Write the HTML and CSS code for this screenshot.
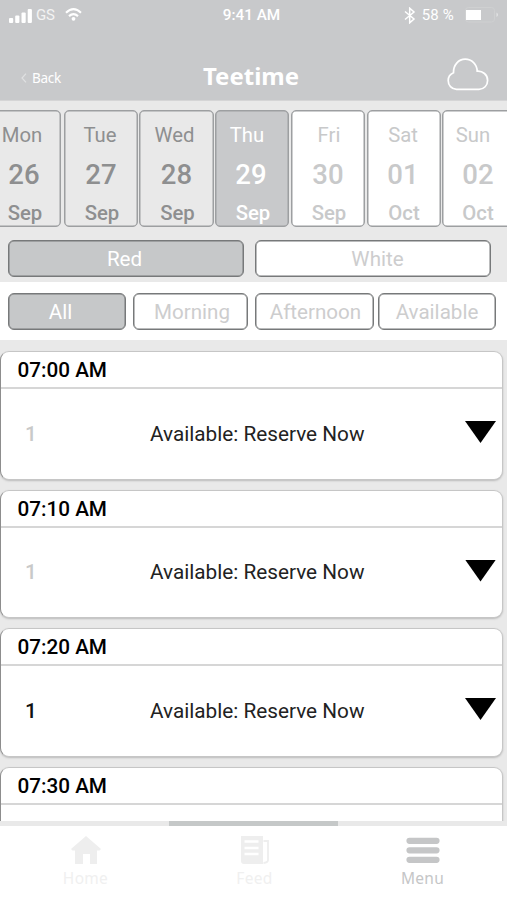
FILE: index.html
```html
<!DOCTYPE html>
<html lang="en">
<head>
<meta charset="utf-8">
<title>Teetime</title>
<link rel="stylesheet" href="styles.css">
</head>
<body>
<header class="header">
  <div class="status">
    <div class="carrier">
      <svg width="24" height="15" viewBox="0 0 24 15" fill="#fff"><rect x="0" y="10" width="4.2" height="5" rx="1"/><rect x="6.2" y="7.5" width="4.2" height="7.5" rx="1"/><rect x="12.5" y="4.5" width="4.2" height="10.5" rx="1"/><rect x="18.7" y="1" width="4.2" height="14" rx="1"/></svg>
      <span>GS</span>
      <svg class="wifi" width="17" height="13" viewBox="0 0 17 13" fill="none" stroke="#fff" stroke-width="2.1"><path d="M1 4.7Q8.500-2.300 16 4.700"/><path d="M4 8.100Q8.500 4 13 8.100"/><circle cx="8.500" cy="10.800" r="1.900" fill="#fff" stroke="none"/></svg>
    </div>
    <div class="clock">9:41 AM</div>
    <div class="power">
      <svg width="12" height="17" viewBox="0 0 12 17" fill="none" stroke="#fff" stroke-width="1.500"><path d="M1 4.500 10 12 5.700 15.800V1.200L10 5 1 12.500"/></svg>
      <span>58 %</span>
      <svg class="battery" width="34" height="16" viewBox="0 0 34 16"><rect x=".5" y=".5" width="29" height="14.500" rx="3" fill="none" stroke="#cfd0d1"/><rect x="1" y="3" width="15" height="10" fill="#fff"/><path d="M31.500 5.500q3 2.200 0 4.500z" fill="#e2e3e4"/></svg>
    </div>
  </div>
  <div class="titlebar">
    <div class="back"><svg width="6" height="10" viewBox="0 0 6 10" fill="none" stroke="#e0e1e2" stroke-width="1.200"><path d="M5 .7 1 5l4 4.300"/></svg><span>Back</span></div>
    <h1>Teetime</h1>
    <svg class="cloud" width="42" height="33" viewBox="0 0 42 33" fill="none" stroke="#fff" stroke-width="1.700"><path d="M9.500 31.300C4.500 31.300 1.200 27.200 1.200 22.500c0-3.500 2-6.300 5.300-7.700C6.200 7 11.500 1.200 18.200 1.200c6.600 0 11.800 5 12 12 5.500-.4 10.400 3.500 10.400 9.200 0 5-3.700 8.900-8.600 8.900z"/></svg>
  </div>
</header>
<section class="days">
  <div class="day mon past"><span>Mon</span><b>26</b><strong>Sep</strong></div>
  <div class="day tue past"><span>Tue</span><b>27</b><strong>Sep</strong></div>
  <div class="day wed past"><span>Wed</span><b>28</b><strong>Sep</strong></div>
  <div class="day thu current"><span>Thu</span><b>29</b><strong>Sep</strong></div>
  <div class="day fri"><span>Fri</span><b>30</b><strong>Sep</strong></div>
  <div class="day sat"><span>Sat</span><b>01</b><strong>Oct</strong></div>
  <div class="day sun"><span>Sun</span><b>02</b><strong>Oct</strong></div>
</section>
<section class="courses">
  <div class="button selected">Red</div>
  <div class="button white">White</div>
</section>
<section class="periods">
  <div class="button selected all">All</div>
  <div class="button morning">Morning</div>
  <div class="button afternoon">Afternoon</div>
  <div class="button available">Available</div>
</section>
<main class="slots">
  <article class="slot"><h2>07:00 AM</h2><div class="row"><span class="count">1</span><span class="label">Available: Reserve Now</span><i class="arrow"></i></div></article>
  <article class="slot"><h2>07:10 AM</h2><div class="row"><span class="count">1</span><span class="label">Available: Reserve Now</span><i class="arrow"></i></div></article>
  <article class="slot"><h2>07:20 AM</h2><div class="row"><span class="count active">1</span><span class="label">Available: Reserve Now</span><i class="arrow"></i></div></article>
  <article class="slot"><h2>07:30 AM</h2><div class="row"></div></article>
</main>
<div class="track"><div class="thumb"></div></div>
<nav class="tabs">
  <div class="tab"><svg width="30" height="29" viewBox="0 0 30 29" fill="#eee"><path d="M15 0 30 13 28.500 14.500H26V28H19V18H12V28H4V14.500H1.500L0 13z"/></svg><span>Home</span></div>
  <div class="tab"><svg width="30" height="29" viewBox="0 0 30 29"><path fill="#eee" d="M1 0H23V28H4Q1 28 1 25z"/><path d="M4.500 5.500h14M4.500 12h14M4.500 18h14" stroke="#fff" stroke-width="2.500" fill="none"/><path d="M23.500 5H28v19q0 2.500-4.500 3" stroke="#eee" stroke-width="1.800" fill="none"/></svg><span>Feed</span></div>
  <div class="tab menu"><svg width="34" height="29" viewBox="0 0 34 29" stroke="#c5c6c7" stroke-width="6.200" stroke-linecap="round"><path d="M3.500 4.800h27M3.500 14.300h27M3.500 23.800h27"/></svg><span>Menu</span></div>
</nav>
</body>
</html>
```
FILE: styles.css
```css
* { box-sizing: border-box; }
body {
  margin: 0;
  width: 507px;
  height: 900px;
  overflow: hidden;
  display: flex;
  flex-direction: column;
  background: #e9e9e9;
  font-family: Roboto, "Liberation Sans", sans-serif;
}
svg { display: block; flex: none; }
h1, h2 { margin: 0; }

.header { flex: none; height: 101px; background: #c8c9cb; color: #fff; border-bottom: 1px solid #d5d5d6; }
.status { display: grid; grid-template-columns: 1fr auto 1fr; height: 30px; padding: 0 8px 0 9px; align-items: center; font-size: 15px; }
.carrier, .power { display: flex; align-items: center; }
.carrier span { margin-left: 3px; letter-spacing: -.1px; color: #f3f3f3; }
.carrier .wifi { margin: 0 0 2px 10px; }
.clock { font-weight: 500; font-size: 15.3px; margin: 0 5px 0 0; }
.power { justify-content: flex-end; }
.power span { margin-left: 6px; letter-spacing: .2px; }
.battery { margin-left: 11px; }
.titlebar { display: grid; grid-template-columns: 1fr auto 1fr; height: 70px; padding: 0 18px 0 21px; align-items: center; font-family: "Noto Sans", sans-serif; }
.back { display: flex; align-items: center; gap: 5px; font-size: 13.500px; letter-spacing: -.3px; padding-top: 26px; }
h1 { font-size: 24px; line-height: 30px; padding-top: 21px; margin-right: 8px; }
.cloud { justify-self: end; margin-top: 19px; }

.days { flex: none; height: 136px; padding-top: 9px; display: flex; width: 520px; }
.day {
  flex: none;
  width: 74px;
  height: 117px;
  border: 1.500px solid #9d9fa1;
  border-radius: 5px;
  box-shadow: inset 0 0 0 .5px #9d9fa1;
  background: #fff;
  color: #c8c9ca;
  display: flex;
  flex-direction: column;
  align-items: center;
  font-size: 20.3px;
}
.day span { line-height: 24px; margin-top: 12px; transform: translateX(var(--name)); }
.day b { font-size: 27.500px; line-height: 32px; margin-top: 12px; font-weight: 500; transform: translateX(var(--date)); }
.day strong { line-height: 24px; margin-top: 10px; font-weight: 500; transform: translateX(var(--month)); }
.past { background: #e9e9e9; color: #8e8f90; }
.current { background: #c8c9cb; color: #fff; }
.mon { margin-left: -13px; --name: -2px; --date: 0px; --month: 1px; }
.tue { margin-left: 3px; --name: -1px; --date: 0px; --month: 1px; }
.wed { margin-left: 1px; width: 75px; --name: -2px; --date: 0px; --month: 1px; }
.thu { margin-left: 1px; --name: -5px; --date: -1px; --month: 1px; }
.fri { margin-left: 2px; --name: 1px; --date: 0px; --month: 1px; }
.sat { margin-left: 2px; --name: -1px; --date: -1px; --month: 0px; }
.sun { margin-left: 1px; --name: -6px; --date: -1px; --month: -1px; }

.courses, .periods { flex: none; display: flex; padding-left: 8px; }
.courses { height: 45px; padding-top: 3px; gap: 11px; }
.periods { height: 58px; padding-top: 11px; background: #fff; }
.button {
  height: 37px;
  border: 1.500px solid #77797a;
  border-radius: 6px;
  box-shadow: inset 0 0 0 .5px #77797a;
  background: #fff;
  color: #cdcdce;
  font-size: 20.600px;
  line-height: 37px;
  text-align: center;
}
.courses .button { width: 236px; }
.courses .white { padding-left: 9px; }
.courses .selected { padding-right: 3px; }
.button.selected { background: #c6c8c9; color: #fff; }
.periods .all { width: 118px; padding-right: 13px; }
.periods .morning { width: 115px; margin-left: 7px; padding-left: 3px; }
.periods .afternoon { width: 119px; margin-left: 7px; padding-left: 2px; }
.periods .available { width: 118px; margin-left: 4px; }

.slots { flex: none; height: 481px; overflow: hidden; padding-top: 11px; display: flex; flex-direction: column; gap: 10px; }
.slot {
  flex: none;
  width: 503px;
  height: 128.500px;
  background: #fff;
  border: 1px solid #c6c6c6;
  border-left: 1px solid #8d8d8d;
  border-radius: 9px;
  box-shadow: 0 1px 2px #bbb;
}
.slot h2 { height: 37px; padding-left: 16.500px; border-bottom: 2px solid #d6d6d6; font-size: 20.700px; font-weight: 500; line-height: 36px; }
.row { height: 89px; display: flex; align-items: center; font-size: 20.750px; color: #222; }
.count { width: 124px; padding-left: 24px; color: #c9c9c9; font-weight: 500; }
.count.active { color: #111; }
.label { margin-left: 25px; }
.arrow { width: 31px; height: 22px; margin: 0 6px 3px auto; background: #000; clip-path: polygon(0 0, 100% 0, 50% 100%); }

.track { flex: none; height: 5px; background: #e9e9e9; }
.thumb { width: 169px; height: 5px; margin-left: 169px; background: #c5c8c8; }
.tabs { flex: 1; background: #fff; display: grid; grid-template-columns: repeat(3, 1fr); padding-top: 10px; }
.tab { display: flex; flex-direction: column; align-items: center; color: #f0f0f0; font: 15.500px/20px "Noto Sans", sans-serif; letter-spacing: .3px; }
.tab:not(.menu) { padding-left: 2px; }
.tab span { margin-top: 3px; }
.tab.menu { color: #c5c6c7; }
```
